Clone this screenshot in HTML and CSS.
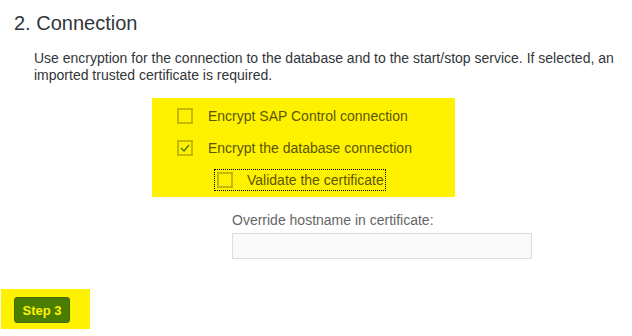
FILE: index.html
```html
<!DOCTYPE html>
<html>
<head>
<meta charset="utf-8">
<link rel="stylesheet" href="styles.css">
</head>
<body>
<div class="page">
  <h2 class="title">2. Connection</h2>
  <p class="desc">Use encryption for the connection to the database and to the start/stop service. If selected, an imported trusted certificate is required.</p>
  <div class="hl-box">
    <label class="row"><span class="cb"></span><span class="lbl">Encrypt SAP Control connection</span></label>
    <label class="row"><span class="cb checked"><svg width="10" height="8" viewBox="0 0 10 8"><path d="M1 4 L4 7 L9 1" fill="none" stroke="#4d7a00" stroke-width="1.4"/></svg></span><span class="lbl">Encrypt the database connection</span></label>
    <label class="row sub"><span class="focus"><span class="cb"></span><span class="lbl">Validate the certificate</span></span></label>
  </div>
  <div class="field">
    <div class="field-label">Override hostname in certificate:</div>
    <div class="input"></div>
  </div>
  <div class="step-hl"><button class="step-btn">Step 3</button></div>
</div>
</body>
</html>
```
FILE: styles.css
```css
html, body { margin: 0; padding: 0; background: #fff; }
body { font-family: "Liberation Sans", Arial, sans-serif; color: #32363a; }
.page { width: 632px; height: 336px; overflow: hidden; }
.title { margin: 0; padding: 11px 0 0 14px; font-size: 20px; font-weight: normal; line-height: 24px; color: #32363a; }
.desc { margin: 15px 0 0 34px; width: 592px; font-size: 14px; line-height: 17px; color: #32363a; }
.hl-box { margin: 14px 0 0 152px; width: 303px; height: 99px; background: #fff200; box-sizing: border-box; padding-top: 10px; }
.row { display: flex; align-items: center; height: 16px; margin-bottom: 16px; padding-left: 25px; font-size: 14px; color: #5c5500; }
.row.sub { padding-left: 63px; }
.cb { width: 16px; height: 16px; box-sizing: border-box; border: 2px solid #c6ba00; display: flex; align-items: center; justify-content: center; flex: none; }
.lbl { margin-left: 15px; }
.focus { display: flex; align-items: center; outline: 1px dotted #000; padding: 2px 1px 2px 2px; }
.focus .lbl { margin-left: 14px; }
.field { margin: 14px 0 0 232px; }
.field-label { font-size: 14px; line-height: 18px; color: #666; }
.input { margin-top: 4px; width: 300px; height: 26px; box-sizing: border-box; border: 1px solid #dcdcdc; background: #fafafa; }
.step-hl { margin: 30px 0 0 1px; width: 89px; height: 40px; background: #fff200; box-sizing: border-box; padding: 8px 0 0 13px; }
.step-btn { width: 56px; height: 26px; background: #4a7d00; border: 1px solid #3f6a00; border-radius: 3px; color: #fff200; font-family: "Liberation Sans", Arial, sans-serif; font-size: 13px; font-weight: bold; padding: 0; }
```
